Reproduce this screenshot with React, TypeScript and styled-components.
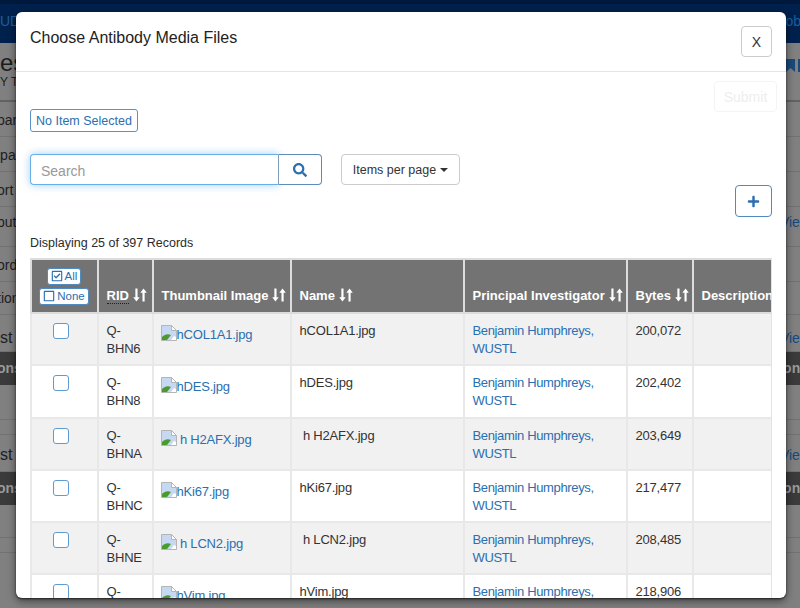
import styled, { createGlobalStyle } from "styled-components";
import { FaPlus, FaRegCheckSquare, FaRegSquare, FaSearch } from "react-icons/fa";

const font = `"Liberation Sans", Arial, sans-serif`;
const blue = "#2a6fb0";

const Global = createGlobalStyle`
  html, body {
    margin: 0;
    padding: 0;
    height: 100%;
    overflow: hidden;
    background: #7f7f7f;
    font-family: ${font};
    font-size: 13px;
    color: #333;
  }
`;

const Page = styled.div`
  width: 800px;
  height: 608px;
  position: relative;
  overflow: hidden;
  background: #808080;
`;

const Nav = styled.div`
  height: 43px;
  background: #00214d;
  border-top: 4px solid #00183c;
  box-sizing: border-box;
  display: flex;
  justify-content: space-between;
  align-items: center;
  color: #1a5f9e;
  font-size: 14px;
  padding-bottom: 6px;
  padding-left: 0;
`;

const NavRight = styled.span`
  margin-right: -1px;
`;

const Heading = styled.div`
  height: 59px;
  box-sizing: border-box;
  padding-top: 8px;
  display: flex;
  justify-content: space-between;
  font-size: 24px;
  line-height: 24px;
  color: #1c1c1c;
  border-bottom: 2px solid #626262;
`;

const Sub = styled.div`
  font-size: 12px;
  line-height: 14px;
  color: #222;
`;

const Marks = styled.div`
  display: flex;
  gap: 3px;
  margin: 8px -7px 0 0;
`;

const Ribbon = styled.svg`
  width: 9px;
  height: 13px;
  fill: #1a4a7a;
`;

const BgRow = styled.div<{ $h: number; $top?: number; $dark?: boolean }>`
  height: ${(p) => p.$h}px;
  box-sizing: border-box;
  padding-top: ${(p) => p.$top ?? 0}px;
  display: flex;
  justify-content: space-between;
  align-items: flex-start;
  font-size: 14px;
  line-height: 20px;
  color: ${(p) => (p.$dark ? "#9a9a9a" : "#1e1e1e")};
  font-weight: ${(p) => (p.$dark ? 700 : 400)};
  background: ${(p) => (p.$dark ? "#3b3b3b" : "transparent")};
  border-bottom: 1px solid ${(p) => (p.$dark ? "#3b3b3b" : "#727272")};
`;

const BgLabel = styled.span<{ $big?: boolean }>`
  margin-left: ${(p) => (p.$big ? 0 : -3)}px;
  font-size: ${(p) => (p.$big ? 16 : 14)}px;
`;

const BgView = styled.span`
  color: #144a7c;
  font-size: 14px;
  white-space: nowrap;
  margin-right: -10px;
`;

const BgCut = styled.span`
  margin-right: -8px;
`;

const Modal = styled.div`
  position: absolute;
  left: 16px;
  top: 12px;
  width: 770px;
  height: 586px;
  background: #fff;
  border-radius: 6px;
  box-shadow: 0 1px 2px rgba(0, 0, 0, 0.6), 0 3px 9px rgba(0, 0, 0, 0.5);
  overflow: hidden;
`;

const ModalHeader = styled.div`
  height: 59px;
  padding: 0 14px 0 14px;
  display: flex;
  justify-content: space-between;
  align-items: flex-start;
  border-bottom: 1px solid #e5e5e5;
`;

const Title = styled.h4`
  margin: 17px 0 0;
  font-size: 16px;
  line-height: 18px;
  font-weight: 400;
  color: #222;
`;

const CloseButton = styled.button`
  margin-top: 14px;
  width: 31px;
  height: 31px;
  padding: 0;
  border: 1px solid #ccc;
  border-radius: 4px;
  background: #fff;
  font-family: ${font};
  font-size: 14px;
  color: #333;
`;

const ModalBody = styled.div`
  padding: 0 14px;
`;

const TopRow = styled.div`
  display: flex;
  justify-content: space-between;
  align-items: flex-start;
  margin-right: -5px;
  padding-top: 9px;
`;

const SelectedButton = styled.button`
  margin-top: 28px;
  height: 23px;
  padding: 0 5px;
  border: 1px solid #5b93c7;
  border-radius: 3px;
  background: #fff;
  color: ${blue};
  font-family: ${font};
  font-size: 12.5px;
`;

const SubmitButton = styled.button`
  width: 63px;
  height: 31px;
  padding: 0;
  border: 1px solid #f4f4f4;
  border-radius: 4px;
  background: #fff;
  color: #eeeeee;
  font-family: ${font};
  font-size: 14px;
`;

const SearchRow = styled.div`
  display: flex;
  align-items: flex-start;
  margin-top: 22px;
`;

const SearchInput = styled.input`
  box-sizing: border-box;
  width: 249px;
  height: 31px;
  padding: 2px 10px 0;
  border: 1px solid #66afe9;
  border-right: 1px solid #7f9fc0;
  border-radius: 4px 0 0 4px;
  outline: none;
  box-shadow: 0 0 8px rgba(102, 175, 233, 0.6);
  font-family: ${font};
  font-size: 14px;
  &::placeholder {
    color: #999;
    opacity: 1;
  }
`;

const SearchButton = styled.button`
  box-sizing: border-box;
  width: 43px;
  height: 31px;
  padding: 0;
  border: 1px solid #5e8cb8;
  border-left: none;
  border-radius: 0 4px 4px 0;
  background: #fff;
  color: ${blue};
  font-size: 14px;
  display: flex;
  align-items: center;
  justify-content: center;
`;

const PerPageButton = styled.button`
  box-sizing: border-box;
  margin-left: 19px;
  width: 119px;
  height: 31px;
  padding: 0;
  border: 1px solid #ccc;
  border-radius: 4px;
  background: #fff;
  color: #333;
  font-family: ${font};
  font-size: 12.5px;
  display: flex;
  align-items: center;
  justify-content: center;
  gap: 4px;
`;

const Caret = styled.span`
  width: 0;
  height: 0;
  border-top: 4px solid #333;
  border-left: 4px solid transparent;
  border-right: 4px solid transparent;
`;

const AddRow = styled.div`
  display: flex;
  justify-content: flex-end;
`;

const AddButton = styled.button`
  box-sizing: border-box;
  width: 37px;
  height: 32px;
  padding: 0;
  border: 1px solid #4f8ac0;
  border-radius: 4px;
  background: #fff;
  color: ${blue};
  font-size: 13px;
  display: flex;
  align-items: center;
  justify-content: center;
`;

const Count = styled.div`
  margin-top: 18px;
  font-size: 12.5px;
  line-height: 16px;
  color: #2b2b2b;
`;

const TableWrap = styled.div`
  margin-top: 7px;
  width: 742px;
  overflow: hidden;
  border-right: 1px solid #e3e3e3;
  box-sizing: border-box;
`;

const Table = styled.table`
  border-collapse: collapse;
  table-layout: fixed;
  width: 790px;
  font-size: 13px;
  line-height: 18px;
  letter-spacing: -0.2px;
`;

const Th = styled.th<{ $w: number }>`
  width: ${(p) => p.$w}px;
  box-sizing: border-box;
  height: 54px;
  padding: 0 7.5px 7px;
  border: 2px solid #dcdcdc;
  background: #737373;
  color: #fff;
  font-size: 13px;
  line-height: 18px;
  letter-spacing: 0;
  font-weight: 700;
  text-align: left;
  vertical-align: bottom;
  white-space: nowrap;
`;

const PickTh = styled(Th)`
  padding: 0 1px 0 0;
  text-align: center;
  vertical-align: middle;
`;

const PickStack = styled.div`
  display: flex;
  flex-direction: column;
  align-items: center;
  gap: 3px;
`;

const PickButton = styled.button`
  box-sizing: border-box;
  height: 17px;
  padding: 0 3px;
  border: 1px solid #4f8ac0;
  border-radius: 3px;
  background: #fff;
  color: ${blue};
  font-family: ${font};
  font-size: 11.5px;
  display: flex;
  align-items: center;
  gap: 2px;
  svg {
    width: 12px;
    height: 12px;
  }
`;

const Abbr = styled.span`
  border-bottom: 1px dotted #222;
`;

const SortSvg = styled.svg`
  width: 14px;
  height: 14px;
  margin-left: 4px;
  vertical-align: -2px;
  fill: #fff;
`;

const Tr = styled.tr<{ $odd: boolean }>`
  height: 52.3px;
  background: ${(p) => (p.$odd ? "#f1f1f1" : "#fff")};
`;

const Td = styled.td`
  box-sizing: border-box;
  padding: 8px 7.5px 6px;
  border: 2px solid #e8e8e8;
  vertical-align: top;
`;

const CheckCell = styled(Td)`
  padding: 9px 7px 0 0;
  text-align: center;
`;

const Check = styled.input`
  appearance: none;
  display: block;
  box-sizing: border-box;
  margin: 0 auto;
  width: 16px;
  height: 16px;
  border: 1.5px solid #5f9bd0;
  border-radius: 3px;
  background: #fff;
`;

const FileLink = styled.a`
  color: ${blue};
  text-decoration: none;
  display: inline-block;
  margin-top: 3px;
  margin-left: -1px;
  white-space: pre;
`;

const BrokenImg = styled.svg`
  width: 16px;
  height: 16px;
  vertical-align: -2px;
`;

const PiLink = styled.a`
  color: ${blue};
  text-decoration: none;
  letter-spacing: -0.35px;
`;

const Name = styled.span`
  white-space: pre;
`;

const SortIcon = () => (
  <SortSvg viewBox="0 0 13 13">
    <path d="M2.2 0.5h2v8h2l-3 4-3-4h2z" />
    <path d="M8.8 12.5h2v-8h2l-3-4-3 4h2z" />
  </SortSvg>
);

const BrokenIcon = () => (
  <BrokenImg viewBox="0 0 16 16">
    <path d="M0.5 0.5h10l5 5v10h-15z" fill="#c7d8f3" stroke="#b5b5b5" />
    <path d="M10.5 0.5v5h5z" fill="#fff" stroke="#b5b5b5" />
    <path d="M1 15v-3c3-3 6-3.5 9-2l-4 5z" fill="#4a9a2e" />
    <path d="M10 15l3-4 2 1v3z" fill="#fff" />
  </BrokenImg>
);

const files = [
  { rid: "BHN6", name: "hCOL1A1.jpg", bytes: "200,072" },
  { rid: "BHN8", name: "hDES.jpg", bytes: "202,402" },
  { rid: "BHNA", name: " h H2AFX.jpg", bytes: "203,649" },
  { rid: "BHNC", name: "hKi67.jpg", bytes: "217,477" },
  { rid: "BHNE", name: " h LCN2.jpg", bytes: "208,485" },
  { rid: "BHNG", name: "hVim.jpg", bytes: "218,906" },
];

const bgRows = [
  { h: 35, top: 8, left: "par", right: false },
  { h: 35, top: 8, left: "ipal", right: false },
  { h: 35, top: 8, left: "ort", right: false },
  { h: 40, top: 5, left: "bute", right: true },
  { h: 35, top: 8, left: "ord", right: false },
  { h: 33, top: 6, left: "tion", right: false },
];

export default function App() {
  return (
    <Page>
      <Global />
      <Nav>
        <span>UDB</span>
        <NavRight>ob</NavRight>
      </Nav>
      <Heading>
        <div>
          es
          <Sub>Y TI</Sub>
        </div>
        <Marks>
          <Ribbon viewBox="0 0 9 13">
            <path d="M0 0h9v13l-4.5-4-4.5 4z" />
          </Ribbon>
          <Ribbon viewBox="0 0 9 13">
            <path d="M0 0h9v13H0z" />
          </Ribbon>
        </Marks>
      </Heading>
      {bgRows.map((row) => (
        <BgRow key={row.left} $h={row.h} $top={row.top}>
          <BgLabel>{row.left}</BgLabel>
          {row.right && <BgView>View</BgView>}
        </BgRow>
      ))}
      <BgRow $h={37} $top={13}>
        <BgLabel $big>st</BgLabel>
        <BgView>View</BgView>
      </BgRow>
      <BgRow $h={33} $top={6} $dark>
        <BgLabel>ons</BgLabel>
        <BgCut>ons</BgCut>
      </BgRow>
      <BgRow $h={35} />
      <BgRow $h={15} />
      <BgRow $h={37} $top={10}>
        <BgLabel $big>st</BgLabel>
        <BgView>View</BgView>
      </BgRow>
      <BgRow $h={33} $top={6} $dark>
        <BgLabel>ons</BgLabel>
        <BgCut>ons</BgCut>
      </BgRow>
      <BgRow $h={33} />
      <BgRow $h={15} />

      <Modal>
        <ModalHeader>
          <Title>Choose Antibody Media Files</Title>
          <CloseButton>X</CloseButton>
        </ModalHeader>
        <ModalBody>
          <TopRow>
            <SelectedButton>No Item Selected</SelectedButton>
            <SubmitButton>Submit</SubmitButton>
          </TopRow>
          <SearchRow>
            <SearchInput placeholder="Search" />
            <SearchButton>
              <FaSearch />
            </SearchButton>
            <PerPageButton>
              Items per page <Caret />
            </PerPageButton>
          </SearchRow>
          <AddRow>
            <AddButton>
              <FaPlus />
            </AddButton>
          </AddRow>
          <Count>Displaying 25 of 397 Records</Count>
          <TableWrap>
            <Table>
              <thead>
                <tr>
                  <PickTh $w={67}>
                    <PickStack>
                      <PickButton>
                        <FaRegCheckSquare /> All
                      </PickButton>
                      <PickButton>
                        <FaRegSquare /> None
                      </PickButton>
                    </PickStack>
                  </PickTh>
                  <Th $w={55}>
                    <Abbr>RID</Abbr>
                    <SortIcon />
                  </Th>
                  <Th $w={138}>
                    Thumbnail Image
                    <SortIcon />
                  </Th>
                  <Th $w={173}>
                    Name
                    <SortIcon />
                  </Th>
                  <Th $w={163}>
                    Principal Investigator
                    <SortIcon />
                  </Th>
                  <Th $w={66}>
                    Bytes
                    <SortIcon />
                  </Th>
                  <Th $w={128}>Description</Th>
                </tr>
              </thead>
              <tbody>
                {files.map((file, i) => (
                  <Tr key={file.rid} $odd={i % 2 === 0}>
                    <CheckCell>
                      <Check type="checkbox" />
                    </CheckCell>
                    <Td>
                      Q-
                      <br />
                      {file.rid}
                    </Td>
                    <Td>
                      <FileLink href="#">
                        <BrokenIcon />
                        {file.name}
                      </FileLink>
                    </Td>
                    <Td>
                      <Name>{file.name}</Name>
                    </Td>
                    <Td>
                      <PiLink href="#">Benjamin Humphreys, WUSTL</PiLink>
                    </Td>
                    <Td>{file.bytes}</Td>
                    <Td />
                  </Tr>
                ))}
              </tbody>
            </Table>
          </TableWrap>
        </ModalBody>
      </Modal>
    </Page>
  );
}
